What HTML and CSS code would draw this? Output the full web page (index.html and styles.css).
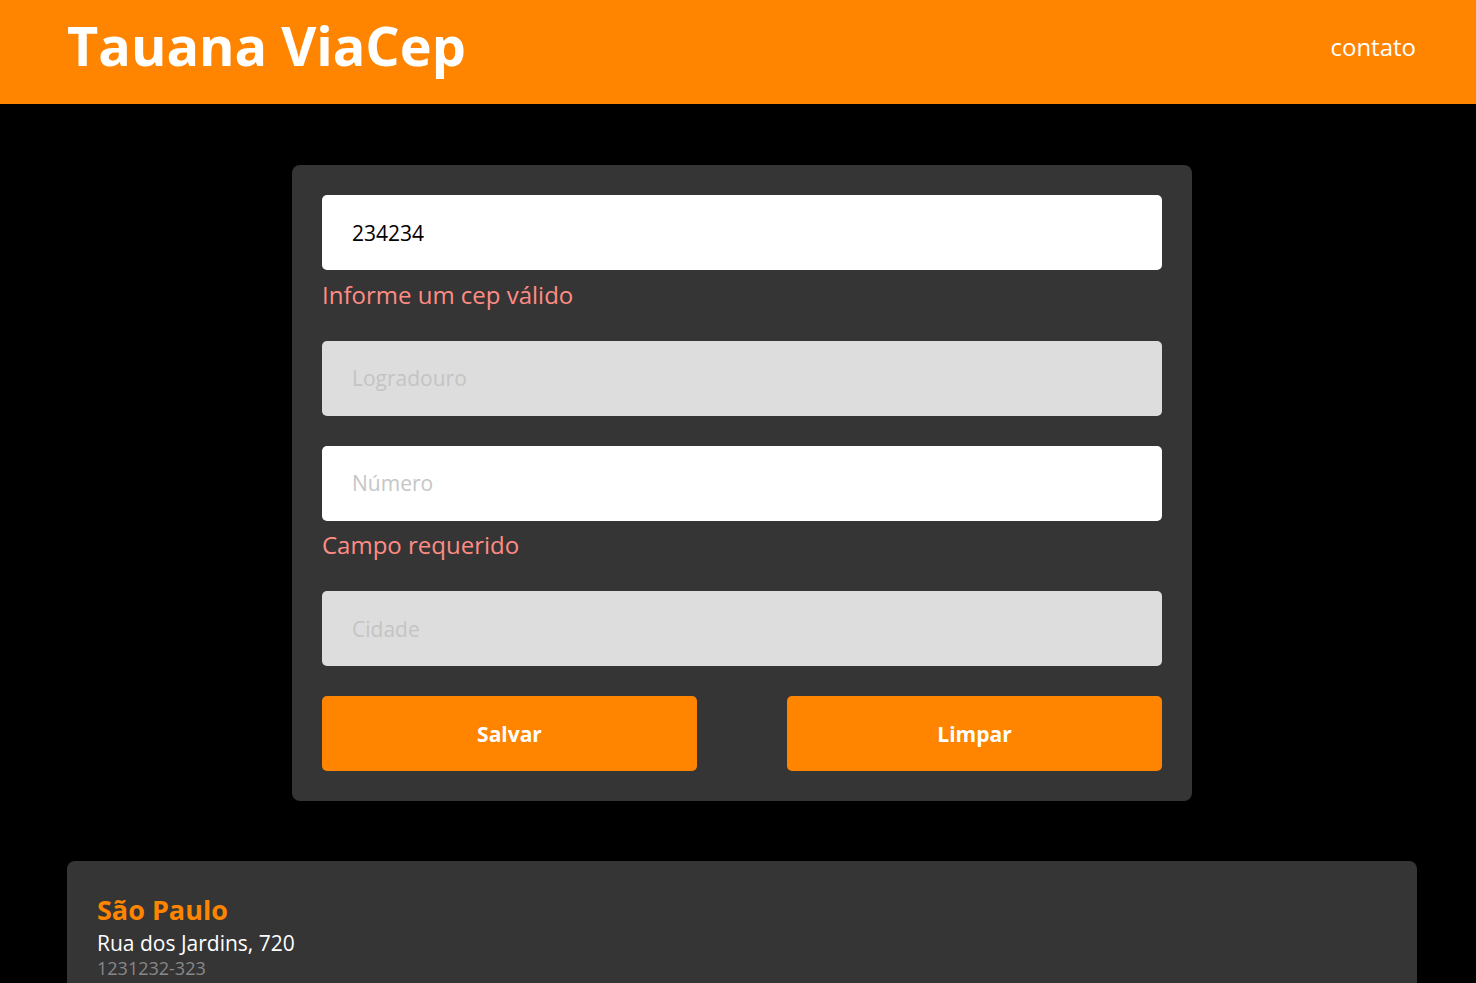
FILE: index.html
```html
<!DOCTYPE html>
<html lang="pt-BR">
<head>
<meta charset="utf-8">
<title>Tauana ViaCep</title>
<link rel="stylesheet" href="styles.css">
</head>
<body>
<header class="topbar">
  <h1 class="brand">Tauana ViaCep</h1>
  <a class="nav-link" href="#">contato</a>
</header>
<main class="main">
  <form class="form-card">
    <div class="field">
      <input class="input" type="text" value="234234" placeholder="CEP">
      <p class="error">Informe um cep válido</p>
    </div>
    <div class="field">
      <input class="input" type="text" placeholder="Logradouro" disabled>
    </div>
    <div class="field">
      <input class="input" type="text" placeholder="Número">
      <p class="error">Campo requerido</p>
    </div>
    <div class="field">
      <input class="input" type="text" placeholder="Cidade" disabled>
    </div>
    <div class="actions">
      <button class="btn" type="button">Salvar</button>
      <button class="btn" type="button">Limpar</button>
    </div>
  </form>
  <section class="result-card">
    <h2 class="result-city">São Paulo</h2>
    <p class="result-street">Rua dos Jardins, 720</p>
    <p class="result-cep">1231232-323</p>
  </section>
</main>
</body>
</html>
```

FILE: styles.css
```css
* { box-sizing: border-box; }
html, body { margin: 0; padding: 0; }
body {
  background: #000;
  font-family: "Open Sans", "Noto Sans", sans-serif;
  color: #fff;
}
.topbar {
  height: 104px;
  background: #ff8500;
  display: flex;
  align-items: center;
  justify-content: space-between;
  padding: 0 60px 0 67px;
}
.brand {
  margin: 0;
  font-size: 54px;
  font-weight: 700;
  line-height: 1;
  color: #fff;
  position: relative;
  top: -7px;
}
.nav-link {
  color: #fff;
  text-decoration: none;
  font-size: 24px;
  position: relative;
  top: -6px;
}
.main {
  padding: 61px 59px 0 67px;
  display: flex;
  flex-direction: column;
  align-items: center;
  gap: 60px;
}
.form-card {
  width: 900px;
  background: #353535;
  border-radius: 8px;
  padding: 30px;
  display: flex;
  flex-direction: column;
  gap: 30px;
}
.field { display: flex; flex-direction: column; }
.input {
  height: 75px;
  border: none;
  border-radius: 5px;
  background: #fff;
  padding: 0 30px;
  font-family: "Open Sans", sans-serif;
  font-size: 21px;
  color: #000;
  outline: none;
}
.input::placeholder { color: #c6c6c6; }
.input:disabled { background: #dddddd; }
.input:disabled::placeholder { color: #c4c4c4; }
.error {
  margin: 8.5px 0 0;
  line-height: 32px;
  font-size: 24px;
  color: #ff8c84;
}
.actions {
  display: flex;
  gap: 90px;
}
.btn {
  flex: 1;
  height: 75px;
  border: none;
  border-radius: 5px;
  background: #ff8500;
  color: #fff;
  font-family: "Open Sans", sans-serif;
  font-size: 21px;
  font-weight: 700;
}
.result-card {
  align-self: stretch;
  background: #353535;
  border-radius: 8px 8px 0 0;
  padding: 30px;
  min-height: 130px;
}
.result-city {
  margin: 0;
  font-size: 27px;
  font-weight: 700;
  color: #ff8500;
  line-height: 37px;
}
.result-street {
  margin: 0;
  font-size: 21px;
  line-height: 30px;
  color: #fff;
}
.result-cep {
  margin: -2px 0 0;
  font-size: 18px;
  line-height: 24px;
  color: #888;
}
```
